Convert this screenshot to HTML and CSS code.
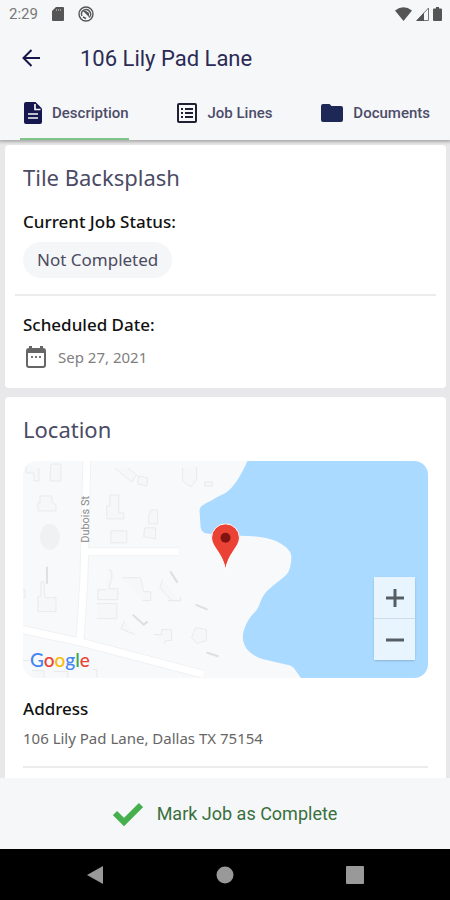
FILE: index.html
```
<!DOCTYPE html>
<html lang="en">
<head>
  <meta charset="UTF-8">
  <title>106 Lily Pad Lane</title>
  <meta name="viewport" content="width=device-width, initial-scale=1.0">
  <link rel="stylesheet" href="styles.css">
</head>
<body>
  <header class="header">
    <div class="status-bar">
      <span class="clock">2:29</span>
      <svg width="12" height="14" viewBox="0 0 12 14"><path d="M4 0h7a1 1 0 0 1 1 1v12a1 1 0 0 1-1 1H1a1 1 0 0 1-1-1V4z" fill="#555"/><path d="M4.500 2v2M6.500 2v2M8.500 2v2" stroke="#999"/></svg>
      <svg width="16" height="16" viewBox="0 0 16 16" fill="none" stroke="#555"><circle cx="8" cy="8" r="7" stroke-width="1.400"/><path d="M4 10a4.500 4.500 0 1 1 7 1.500" stroke-width="1.400"/><path d="M5 5l6 6V7L8 5z" fill="#555" stroke="none"/><path d="M5 11l3 1.500" stroke-width="1.500"/></svg>
      <div class="signals">
        <svg width="17" height="14" viewBox="0 0 17 14"><path d="M0 3.500Q8.500-3 17 3.500L8.500 14z" fill="#555"/></svg>
        <svg width="13" height="14" viewBox="0 0 13 14"><path d="M12.500 1v12.500H1z" fill="#f6f7f9" stroke="#777"/><path d="M0 14L8 5.500V14z" fill="#555"/></svg>
        <svg width="9" height="14" viewBox="0 0 9 14"><path d="M3 0h3v1.500h2a1 1 0 0 1 1 1V13a1 1 0 0 1-1 1H1a1 1 0 0 1-1-1V2.500a1 1 0 0 1 1-1h2z" fill="#555"/></svg>
      </div>
    </div>

    <div class="title-bar">
      <button class="back-btn" aria-label="Back">
        <svg width="18" height="18" viewBox="0 0 18 18" fill="none" stroke="#17174a" stroke-width="2"><path d="M9.500 1L1.500 9l8 8M2 9h16"/></svg>
      </button>
      <h1>106 Lily Pad Lane</h1>
    </div>

    <nav class="tabs">
      <button class="tab active">
        <svg width="18" height="22" viewBox="0 0 18 22"><path d="M2 0h9.500L18 6.500V20a2 2 0 0 1-2 2H2a2 2 0 0 1-2-2V2a2 2 0 0 1 2-2z" fill="#17174f"/><path d="M11 2v5.500h5.500M4 12h10M4 16h10" fill="none" stroke="#f6f7f9" stroke-width="1.700"/></svg>
        Description
      </button>
      <button class="tab">
        <svg width="20" height="20" viewBox="0 0 20 20" fill="none" stroke="#202033" stroke-width="2"><rect x="1" y="1" width="18" height="18" rx="1"/><path d="M4 6h2M4 10h2M4 14h2M8 6h8M8 10h8M8 14h8"/></svg>
        Job Lines
      </button>
      <button class="tab">
        <svg width="22" height="18" viewBox="0 0 22 18"><path d="M2 0h6.500l2 2H20a2 2 0 0 1 2 2v12a2 2 0 0 1-2 2H2a2 2 0 0 1-2-2V2a2 2 0 0 1 2-2z" fill="#1d2856"/></svg>
        Documents
      </button>
    </nav>
  </header>

  <main class="content">
    <section class="card">
      <h2>Tile Backsplash</h2>
      <h3>Current Job Status:</h3>
      <span class="chip">Not Completed</span>
      <hr class="wide">
      <h3>Scheduled Date:</h3>
      <div class="date">
        <svg width="20" height="22" viewBox="0 0 20 22"><rect x="1" y="3" width="18" height="18" rx="2" fill="none" stroke="#666" stroke-width="2"/><path d="M1 3h18v4H1zM3 0h3v3H3zM14 0h3v3h-3z" fill="#666"/><path d="M5 11h2M9 11h2M13 11h2" stroke="#777" stroke-width="2"/></svg>
        Sep 27, 2021
      </div>
    </section>

    <section class="card">
      <h2>Location</h2>
      <div class="map">
        <svg class="map-art" viewBox="0 0 406 218" preserveAspectRatio="xMidYMid slice">
          <rect width="406" height="218" fill="#f8f9fa"/>
          <!-- houses -->
          <g fill="#f6f7f8" stroke="#e9eaec">
            <path d="M3 4v8h8v8h5V7M28 3h10v17H27zM17 35h12v6l4 3v6H15v-8h2zM21 121h-3v15h-3v15h18v-14H22zM0 129h2v8H0"/>
            <path d="M92 7l17 14 5-7-9-7M116 15l9 2-1 8-9-2zM160 7v13l8 6 6-7V6M182 21h8v4h-8zM87 34h9v18h5v6H84V45h3zM128 49h7v14h-9V53h2zM88 70h16v12H88zM122 67h11v11l-12-2z"/>
            <path d="M86 109l3 1v8l-3 10h9v11H75v-10h8M99 117h19l3 14h7v9h-8M74 143h20v15H74M147 110l6 11M140 119l-3 8 12 13h8M145 140h13v-4M131 174h8v-5h10v11h-6l-1 3M102 160l-4 8 14 6M173 167l-4 10 5 6 10-3v-11z"/>
            <path d="M9 210h12v8H10M31 211h14v7M70 209h4v8M0 200h6"/>
          </g>
          <ellipse cx="27" cy="76" rx="10" ry="13" fill="#f0f1f2"/>
          <path d="M24 106v17M110 154l11 10 4-3M173 144l12 5M184 192l12 4M148 111l7 11" fill="none" stroke="#dddfe1" stroke-width="2"/>
          <!-- roads -->
          <path d="M64 0L61 120L57 182M64 91h92M0 169L60 182L181 214" fill="none" stroke="#f0f1f3" stroke-width="9"/>
          <path d="M64 0L61 120L57 182M64 91h92M0 169L60 182L181 214" fill="none" stroke="#fff" stroke-width="7"/>
          <text class="street" transform="translate(66 82) rotate(-90)">Dubois St</text>
          <!-- lake -->
          <path d="M225 0Q214 25 203 32Q194 36 188 40Q176 45 177 50L178 66Q179 73 186 73L218 75Q240 75 253 80Q268 87 269 95Q269 109 264 114C257 121 246 127 241 135C237 141 238 146 231 153C222 163 219 175 221 181C223 191 232 196 242 199L268 205Q272 207 274 211L279 218H406V0z" fill="#aadaff"/>
          <path d="M203 63a14 14 0 0 1 14 14c0 9-11 15-14 32c-3-17-14-23-14-32a14 14 0 0 1 14-14z" fill="#ea4335" stroke="#fff"/>
          <circle cx="203" cy="77" r="5" fill="#811411"/>
        </svg>
        <div class="google"><span class="b">G</span><span class="r">o</span><span class="y">o</span><span class="b">g</span><span class="g">l</span><span class="r">e</span></div>
        <div class="zoom">
          <button aria-label="Zoom in"><svg width="20" height="20" viewBox="0 0 20 20"><path d="M10 1v18M1 10h18" stroke="#555e64" stroke-width="3"/></svg></button>
          <button aria-label="Zoom out"><svg width="20" height="20" viewBox="0 0 20 20"><path d="M1 10h18" stroke="#555e64" stroke-width="3"/></svg></button>
        </div>
      </div>
      <h3>Address</h3>
      <p class="address">106 Lily Pad Lane, Dallas TX 75154</p>
      <hr>
    </section>
  </main>

  <button class="complete-btn">
    <svg width="30" height="24" viewBox="0 0 30 24"><path d="M2 11l9 9L28 3" fill="none" stroke="#45b04c" stroke-width="6"/></svg>
    Mark Job as Complete
  </button>

  <nav class="system-nav">
    <button aria-label="System back"><svg width="18" height="18" viewBox="0 0 18 18"><path d="M17 0v18L1 9z" fill="#999"/></svg></button>
    <button aria-label="Home"><svg width="18" height="18" viewBox="0 0 18 18"><circle cx="9" cy="9" r="8.500" fill="#999"/></svg></button>
    <button aria-label="Recent apps"><svg width="18" height="18" viewBox="0 0 18 18"><rect width="18" height="18" rx="1" fill="#999"/></svg></button>
  </nav>
</body>
</html>
```
FILE: styles.css
```
:root {
  --bar: #f6f7f9;
  --navy: #2b2b55;
  --green: #81c48b;
}

* {
  box-sizing: border-box;
}

body {
  margin: 0;
  height: 100vh;
  display: flex;
  flex-direction: column;
  background: #e8e8ea;
  font-family: "Noto Sans", sans-serif;
}

button {
  padding: 0;
  border: none;
  background: none;
  font-family: Roboto, sans-serif;
  cursor: pointer;
}

svg {
  display: block;
  flex: none;
}

h1, h2, h3, p {
  margin: 0;
}

.header {
  position: relative;
  background: var(--bar);
  box-shadow: 0 1px 3px 1px #aaa;
  font-family: Roboto, sans-serif;
}

.status-bar {
  display: flex;
  align-items: center;
  gap: 14px;
  height: 28px;
  padding: 0 8px 0 9px;
}

.clock {
  font-size: 15px;
  color: #777;
}

.signals {
  display: flex;
  gap: 4px;
  margin-left: auto;
}

.title-bar {
  display: flex;
  align-items: center;
  gap: 40px;
  height: 60px;
  padding-left: 22px;
}

h1 {
  font-size: 22px;
  font-weight: 400;
  color: var(--navy);
}

.tabs {
  display: flex;
  justify-content: space-between;
  height: 52px;
  padding: 0 20px;
}

.tab {
  display: flex;
  align-items: center;
  gap: 10px;
  padding-left: 4px;
  border-bottom: 2px solid transparent;
  font-size: 15px;
  font-weight: 500;
  color: #4d4d69;
}

.tab.active {
  border-bottom-color: var(--green);
}

.content {
  flex: 1;
  min-height: 0;
  overflow: hidden;
  padding: 5px 4px 0 5px;
}

.card {
  margin-bottom: 9px;
  padding: 16px 18px;
  border-radius: 4px;
  background: #fff;
}

h2 {
  font-size: 22px;
  font-weight: 400;
  line-height: 32px;
  color: #4b4b65;
}

h3 {
  margin-top: 16px;
  font-size: 17px;
  font-weight: 500;
  line-height: 26px;
  color: #111;
}

.chip {
  display: inline-block;
  margin-top: 7px;
  padding: 0 14px;
  border-radius: 18px;
  background: #f5f6f7;
  font-size: 17px;
  line-height: 36px;
  color: #4b4b62;
}

hr {
  height: 2px;
  margin: 16px 0;
  border: none;
  background: #ececee;
}

hr.wide {
  margin: 16px -8px;
}

.date {
  display: flex;
  align-items: center;
  gap: 12px;
  height: 30px;
  margin-top: 4px;
  padding-left: 3px;
  font-size: 15px;
  color: #808080;
}

.map {
  position: relative;
  margin: 16px 0 18px;
  overflow: hidden;
  border-radius: 14px;
}

.map-art {
  width: 100%;
}

.street {
  font-family: Roboto, sans-serif;
  font-size: 11px;
  fill: #888;
}

.google {
  position: absolute;
  left: 7px;
  bottom: 6px;
  font-family: Lato, sans-serif;
  font-size: 19px;
  font-weight: 500;
  line-height: 24px;
}

.b { color: #4285f4; }
.r { color: #ea4335; }
.y { color: #fbbc05; }
.g { color: #34a853; }

.zoom {
  position: absolute;
  right: 13px;
  bottom: 18px;
  display: flex;
  flex-direction: column;
  gap: 1px;
  border-radius: 2px;
  background: #cbdce8;
  box-shadow: 0 1px 2px #8ab4d4;
}

.zoom button {
  display: grid;
  place-items: center;
  width: 41px;
  height: 41px;
  background: #e8f5ff;
}

.address {
  margin-top: 4px;
  font-size: 15px;
  line-height: 24px;
  color: #666;
}

.complete-btn {
  display: flex;
  align-items: center;
  justify-content: center;
  gap: 14px;
  height: 71px;
  background: var(--bar);
  font-size: 18px;
  color: #39703d;
}

.system-nav {
  display: flex;
  justify-content: space-between;
  height: 51px;
  padding: 0 86px;
  background: #000;
}
```
